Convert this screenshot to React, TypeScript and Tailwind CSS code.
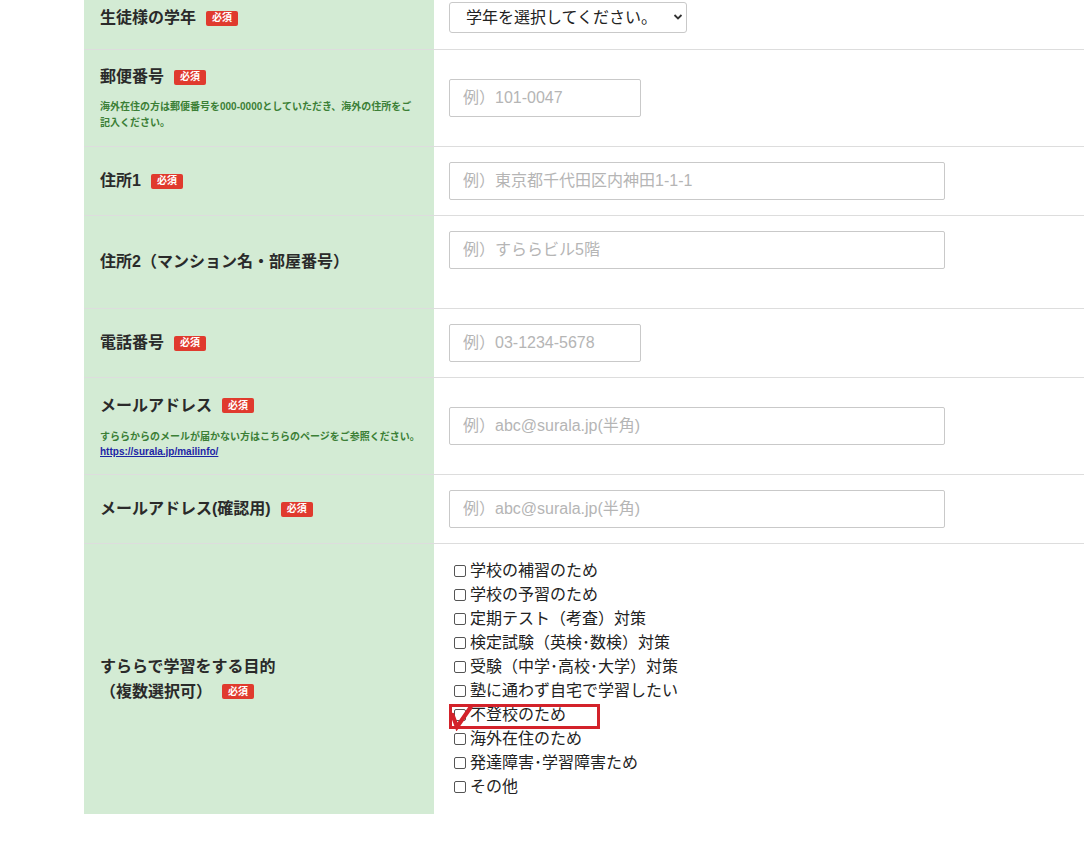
import React from "react";

const FONT = { fontFamily: '"Liberation Sans", "Noto Sans CJK JP", sans-serif' };

function Badge() {
  return (
    <span className="ml-[10px] inline-flex h-[15px] items-center rounded-[2px] bg-[#e03a2e] px-[6px] text-[10px] font-bold leading-none text-white align-middle">
      必須
    </span>
  );
}

function Label({ text }: { text: string }) {
  return (
    <div className="flex items-center text-[16px] font-bold leading-[24px] text-[#2a2a2a]">
      <span>{text}</span>
      <Badge />
    </div>
  );
}

function Input({ placeholder, wide }: { placeholder: string; wide?: boolean }) {
  return (
    <input
      readOnly
      placeholder={placeholder}
      className={
        (wide ? "w-[496px]" : "w-[192px]") +
        " h-[38px] rounded-[2px] border border-[#c9c9c9] bg-white pl-[13px] text-[16px] outline-none placeholder:text-[#b5b5b5]"
      }
      style={FONT}
    />
  );
}

const options = [
  "学校の補習のため",
  "学校の予習のため",
  "定期テスト（考査）対策",
  "検定試験（英検･数検）対策",
  "受験（中学･高校･大学）対策",
  "塾に通わず自宅で学習したい",
  "不登校のため",
  "海外在住のため",
  "発達障害･学習障害ため",
  "その他",
];

export default function App() {
  return (
    <div className="min-h-[844px] bg-white" style={FONT}>
      <div className="ml-[84px] w-[1000px]">
        {/* Row 1 */}
        <div className="flex h-[50px] border-b border-[#dddddd]">
          <div className="w-[350px] bg-[#d3ebd4] pl-[16px] pt-[6px]">
            <Label text="生徒様の学年" />
          </div>
          <div className="flex-1 pl-[15px] pt-[2px]">
            <div className="relative w-[238px]">
              <select
                className="h-[31px] w-[238px] appearance-none rounded-[3px] border border-[#c9c9c9] bg-white pl-[16px] text-[16px] text-[#222] outline-none"
                style={FONT}
                defaultValue=""
              >
                <option value="">学年を選択してください。</option>
              </select>
              <svg
                className="pointer-events-none absolute right-[4px] top-[11px]"
                width="10"
                height="8"
                viewBox="0 0 10 8"
              >
                <path d="M1.5 2 L5 5.5 L8.5 2" fill="none" stroke="#333" strokeWidth="1.8" />
              </svg>
            </div>
          </div>
        </div>

        {/* Row 2 */}
        <div className="flex h-[97px] border-b border-[#dddddd]">
          <div className="flex w-[350px] flex-col justify-center bg-[#d3ebd4] pl-[16px]">
            <Label text="郵便番号" />
            <div className="mt-[10px] pr-[20px] text-[10px] font-bold leading-[16px] text-[#3b7f36]">
              海外在住の方は郵便番号を000-0000としていただき、海外の住所をご記入ください。
            </div>
          </div>
          <div className="flex flex-1 items-center pl-[15px]">
            <Input placeholder="例）101-0047" />
          </div>
        </div>

        {/* Row 3 */}
        <div className="flex h-[69px] border-b border-[#dddddd]">
          <div className="flex w-[350px] flex-col justify-center bg-[#d3ebd4] pl-[16px]">
            <Label text="住所1" />
          </div>
          <div className="flex flex-1 items-center pl-[15px]">
            <Input placeholder="例）東京都千代田区内神田1-1-1" wide />
          </div>
        </div>

        {/* Row 4 */}
        <div className="flex h-[93px] border-b border-[#dddddd]">
          <div className="flex w-[350px] flex-col justify-center bg-[#d3ebd4] pl-[16px]">
            <div className="text-[16px] font-bold leading-[24px] text-[#2a2a2a]">
              住所2（マンション名・部屋番号）
            </div>
          </div>
          <div className="flex flex-1 items-start pl-[15px] pt-[15px]">
            <Input placeholder="例）すららビル5階" wide />
          </div>
        </div>

        {/* Row 5 */}
        <div className="flex h-[69px] border-b border-[#dddddd]">
          <div className="flex w-[350px] flex-col justify-center bg-[#d3ebd4] pl-[16px]">
            <Label text="電話番号" />
          </div>
          <div className="flex flex-1 items-center pl-[15px]">
            <Input placeholder="例）03-1234-5678" />
          </div>
        </div>

        {/* Row 6 */}
        <div className="flex h-[97px] border-b border-[#dddddd]">
          <div className="flex w-[350px] flex-col justify-center bg-[#d3ebd4] pl-[16px]">
            <Label text="メールアドレス" />
            <div className="mt-[11px] text-[10px] font-bold leading-[15px] text-[#3b7f36]">
              すららからのメールが届かない方はこちらのページをご参照ください。
            </div>
            <a
              href="#"
              className="text-[10px] font-bold leading-[15px] text-[#1d24a6] underline"
            >
              https://surala.jp/mailinfo/
            </a>
          </div>
          <div className="flex flex-1 items-center pl-[15px]">
            <Input placeholder="例）abc@surala.jp(半角)" wide />
          </div>
        </div>

        {/* Row 7 */}
        <div className="flex h-[69px] border-b border-[#dddddd]">
          <div className="flex w-[350px] flex-col justify-center bg-[#d3ebd4] pl-[16px]">
            <Label text="メールアドレス(確認用)" />
          </div>
          <div className="flex flex-1 items-center pl-[15px]">
            <Input placeholder="例）abc@surala.jp(半角)" wide />
          </div>
        </div>

        {/* Row 8 */}
        <div className="flex h-[270px]">
          <div className="flex w-[350px] flex-col justify-center bg-[#d3ebd4] pl-[16px]">
            <div className="text-[16px] font-bold leading-[25px] text-[#2a2a2a]">
              すららで学習をする目的
            </div>
            <div className="flex items-center text-[16px] font-bold leading-[25px] text-[#2a2a2a]">
              <span>（複数選択可）</span>
              <Badge />
            </div>
          </div>
          <div className="flex flex-1 flex-col justify-center pl-[15px]">
            {options.map((o, i) => (
              <div key={o} className="relative flex h-[24px] items-center text-[16px] text-[#222]">
                <span className="ml-[5px] mr-[4px] inline-block h-[12px] w-[12px] shrink-0 rounded-[2px] border border-[#555] bg-white" />
                <span>{o}</span>
                {i === 6 && (
                  <>
                    <span className="pointer-events-none absolute left-0 top-[1px] h-[25px] w-[151px] border-[3px] border-[#d3222a]" />
                    <svg
                      className="pointer-events-none absolute left-0 top-[2px]"
                      width="24"
                      height="26"
                      viewBox="0 0 24 26"
                    >
                      <path
                        d="M3.5 10 L8 22 L21.5 2.5"
                        fill="none"
                        stroke="#d3222a"
                        strokeWidth="4.2"
                        strokeLinejoin="miter"
                        strokeLinecap="round"
                      />
                    </svg>
                  </>
                )}
              </div>
            ))}
          </div>
        </div>
      </div>
    </div>
  );
}
